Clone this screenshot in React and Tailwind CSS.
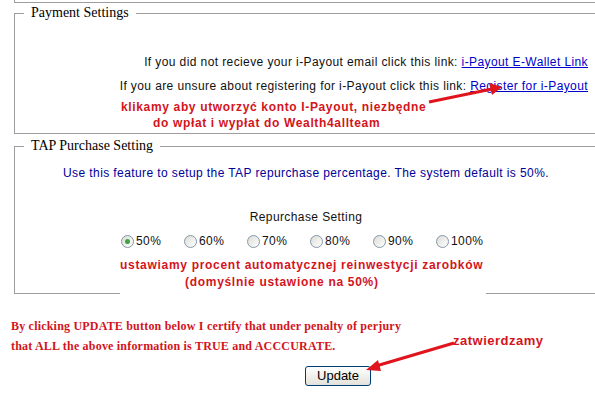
import React from 'react';

const options = ['50%', '60%', '70%', '80%', '90%', '100%'];

const Radio = ({ checked }) => (
  <span className="inline-flex items-center justify-center w-[13px] h-[13px] rounded-full border border-[#8597a8] bg-gradient-to-br from-[#dcdcd6] to-white">
    {checked && <span className="w-[5px] h-[5px] rounded-full bg-[#3fa33f]" />}
  </span>
);

const App = () => {
  return (
    <div className="relative w-[595px] h-[393px] overflow-hidden bg-white font-['Liberation_Sans',Arial,sans-serif] text-[12px] tracking-[0.4px] text-[#111]">
      {/* bottom of the previous box */}
      <div className="ml-[14px] h-[3px] border-l border-b border-[#9d9d9d]" />

      {/* Payment Settings */}
      <fieldset className="ml-[14px] mt-[2px] w-[583px] border border-r-0 border-[#9d9d9d]">
        <legend className="ml-[9px] px-[7px] font-['Liberation_Serif',serif] text-[14px] leading-[16px] tracking-normal text-black">
          Payment Settings
        </legend>
        <div className="pt-[29px] pr-[9px] text-right">
          <div className="h-[24px] leading-[24px]">
            If you did not recieve your i-Payout email click this link:{' '}
            <a className="text-[#0000cc] underline">i-Payout E-Wallet Link</a>
          </div>
          <div className="h-[24px] leading-[24px]">
            If you are unsure about registering for i-Payout click this link:{' '}
            <a className="text-[#0000cc] underline">Register for i-Payout</a>
          </div>
        </div>
        <div className="font-bold text-[#d3141c] tracking-[0.65px] leading-[16px] pt-[1px] pb-[2px]">
          <div className="pl-[106px]">klikamy aby utworzyć konto I-Payout, niezbędne</div>
          <div className="pl-[138px]">do wpłat i wypłat do Wealth4allteam</div>
        </div>
      </fieldset>

      {/* TAP Purchase Setting */}
      <fieldset className="ml-[14px] mt-[4px] w-[583px] border border-r-0 border-[#9d9d9d]">
        <legend className="ml-[9px] px-[7px] font-['Liberation_Serif',serif] text-[14px] leading-[16px] tracking-normal text-black">
          TAP Purchase Setting
        </legend>
        <div className="pt-[11px] text-center text-[#000099] leading-[16px]">
          Use this feature to setup the TAP repurchase percentage. The system default is 50%.
        </div>
        <div className="pt-[28px] text-center leading-[16px]">Repurchase Setting</div>
        <div className="mt-[8px] h-[16px] flex items-center pl-[106px] leading-[16px]">
          {options.map((o, i) => (
            <label key={o} className="w-[63px] flex items-center gap-[2px]">
              <Radio checked={i === 0} />
              <span>{o}</span>
            </label>
          ))}
        </div>
        <div className="relative mt-[8px] mb-[-5px] ml-[105px] w-[366px] bg-white font-bold text-[#d3141c] tracking-[0.7px] leading-[17px] pb-[7px]">
          <div>ustawiamy procent automatycznej reinwestycji zarobków</div>
          <div className="pl-[65px]">(domyślnie ustawione na 50%)</div>
        </div>
      </fieldset>

      {/* certification */}
      <div className="mt-[22px] pl-[11px] font-['Liberation_Serif',serif] font-bold text-[12px] tracking-[0.2px] text-[#d3141c] leading-[20px]">
        <div>By clicking UPDATE button below I certify that under penalty of perjury</div>
        <div className="relative">
          <span>that ALL the above information is TRUE and ACCCURATE.</span>
          <span className="absolute left-[442px] top-[-5px] font-['Liberation_Sans',Arial,sans-serif] text-[13px] tracking-[0.5px]">zatwierdzamy</span>
        </div>
      </div>

      <div className="mt-[10px] pl-[305px]">
        <button className="w-[66px] h-[20px] rounded-[3px] border border-[#003c74] bg-gradient-to-b from-white to-[#e3e2da] text-[13px] leading-[18px] tracking-normal text-black">
          Update
        </button>
      </div>

      {/* annotation arrows */}
      <svg className="absolute inset-0 pointer-events-none" width="595" height="393">
        <line x1="429" y1="102" x2="492" y2="89" stroke="#e0141c" strokeWidth="3" />
        <polygon points="502,87 489,83 492,95" fill="#e0141c" />
        <line x1="454" y1="343" x2="376" y2="366" stroke="#e0141c" strokeWidth="3" />
        <polygon points="366,370 378,360 381,371" fill="#e0141c" />
      </svg>
    </div>
  );
};

export default App;
